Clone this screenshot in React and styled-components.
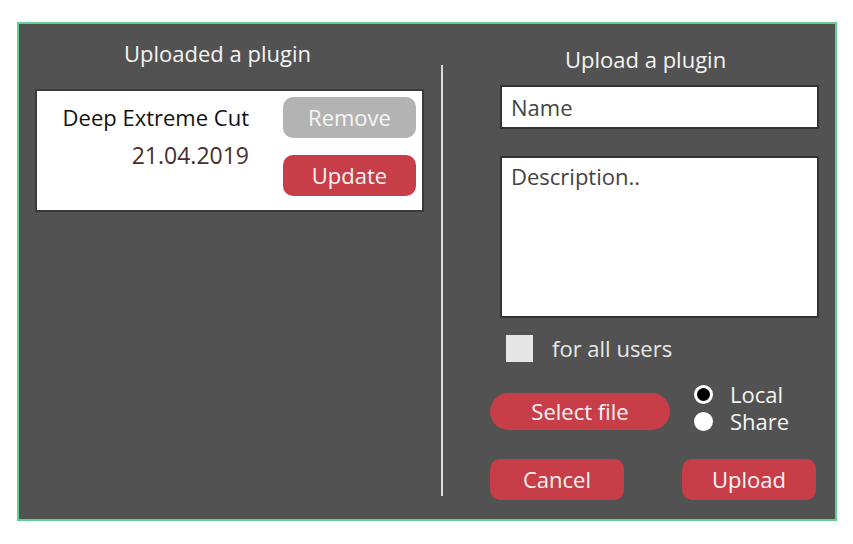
import React, { useState } from 'react';
import styled, { createGlobalStyle } from 'styled-components';

const GlobalStyle = createGlobalStyle`
    body {
        margin: 0;
        background: #fff;
        font-family: "Open Sans", "Liberation Sans", sans-serif;
    }
    * { box-sizing: border-box; }
`;

const Panel = styled.div`
    display: flex;
    width: 820px;
    height: 499px;
    margin: 22px 0 0 17px;
    background: #525252;
    border: 2px solid #5ed38f;
`;

const LeftColumn = styled.div`
    width: 422px;
    padding: 14px 0 0 16px;
    display: flex;
    flex-direction: column;
`;

const Divider = styled.div`
    width: 2px;
    margin: 41px 0 23px;
    background: #dcdcdc;
`;

const RightColumn = styled.div`
    flex: 1;
    padding: 20px 0 0 57px;
    display: flex;
    flex-direction: column;
`;

const Title = styled.h2`
    margin: 0;
    font-size: 22px;
    font-weight: 400;
    line-height: 30px;
    color: #f4f4f4;
    text-align: ${p => p.$align || 'center'};
    padding-left: ${p => p.$indent || 0}px;
    padding-right: ${p => p.$trail || 0}px;
    width: ${p => p.$width ? p.$width + 'px' : 'auto'};
`;

const Card = styled.div`
    margin-top: 21px;
    width: 389px;
    height: 123px;
    background: #fff;
    border: 2px solid #3a3a3a;
    display: flex;
    padding: 6px 6px 0 0;
`;

const CardInfo = styled.div`
    width: 212px;
    padding-top: 7px;
    text-align: right;
    display: flex;
    flex-direction: column;
    gap: 11px;
`;

const PluginName = styled.div`
    font-size: 22px;
    line-height: 27px;
    color: #111;
`;

const PluginDate = styled.div`
    font-size: 23px;
    line-height: 27px;
    color: #4a2e2e;
`;

const CardActions = styled.div`
    margin-left: auto;
    display: flex;
    flex-direction: column;
    gap: 17px;
`;

const Button = styled.button`
    width: ${p => p.$width}px;
    height: ${p => p.$height || 41}px;
    margin-top: ${p => p.$offset || 0}px;
    border: none;
    border-radius: ${p => p.$pill ? '19px' : '10px'};
    background: ${p => p.$variant === 'grey' ? '#b3b3b3' : '#c83e48'};
    color: #f6f6f6;
    font-family: inherit;
    font-size: 22px;
    line-height: 27px;
    padding: 0;
    cursor: pointer;
`;

const TextInput = styled.input`
    margin-top: 11px;
    width: 319px;
    height: 44px;
    border: 2px solid #333;
    background: #fff;
    padding: 0 9px;
    font-family: inherit;
    font-size: 22px;
    color: #333;
    outline: none;
    &::placeholder { color: #444; }
`;

const TextArea = styled.textarea`
    margin-top: 27px;
    width: 319px;
    height: 162px;
    border: 2px solid #333;
    background: #fff;
    padding: 3px 9px;
    font-family: inherit;
    font-size: 22px;
    line-height: 30px;
    color: #333;
    resize: none;
    outline: none;
    &::placeholder { color: #444; }
`;

const CheckRow = styled.label`
    margin: 17px 0 0 6px;
    height: 27px;
    display: flex;
    align-items: center;
    gap: 19px;
    font-size: 22px;
    line-height: 27px;
    color: #e8e8e8;
    cursor: pointer;
`;

const CheckBox = styled.span`
    width: 27px;
    height: 27px;
    background: #e6e6e6;
    display: flex;
    align-items: center;
    justify-content: center;
    color: #333;
    font-size: 18px;
`;

const FileRow = styled.div`
    margin: 19px 0 0 -10px;
    display: flex;
    align-items: flex-start;
    gap: 24px;
`;

const RadioGroup = styled.div`
    display: flex;
    flex-direction: column;
`;

const RadioOption = styled.label`
    display: flex;
    align-items: center;
    gap: 17px;
    height: 27px;
    font-size: 22px;
    line-height: 27px;
    color: #f4f4f4;
    cursor: pointer;
`;

const RadioDot = styled.span`
    width: 19px;
    height: 19px;
    border-radius: 50%;
    background: ${p => p.$checked ? '#000' : '#fff'};
    border: 3px solid #fff;
`;

const ActionRow = styled.div`
    margin: 24px 0 0 -10px;
    width: 326px;
    display: flex;
    justify-content: space-between;
`;

export default function App() {
    const [forAll, setForAll] = useState(false);
    const [target, setTarget] = useState('local');

    return (
        <>
            <GlobalStyle />
            <Panel>
                <LeftColumn>
                    <Title $align="center" $width={389} $trail={24}>Uploaded a plugin</Title>
                    <Card>
                        <CardInfo>
                            <PluginName>Deep Extreme Cut</PluginName>
                            <PluginDate>21.04.2019</PluginDate>
                        </CardInfo>
                        <CardActions>
                            <Button $width={133} $variant="grey">Remove</Button>
                            <Button $width={133}>Update</Button>
                        </CardActions>
                    </Card>
                </LeftColumn>
                <Divider />
                <RightColumn>
                    <Title $align="left" $indent={65}>Upload a plugin</Title>
                    <TextInput placeholder="Name" />
                    <TextArea placeholder="Description.." />
                    <CheckRow onClick={() => setForAll(!forAll)}>
                        <CheckBox>{forAll ? '✓' : ''}</CheckBox>
                        for all users
                    </CheckRow>
                    <FileRow>
                        <Button $width={180} $height={37} $offset={12} $pill>Select file</Button>
                        <RadioGroup>
                            <RadioOption onClick={() => setTarget('local')}>
                                <RadioDot $checked={target === 'local'} />
                                Local
                            </RadioOption>
                            <RadioOption onClick={() => setTarget('share')}>
                                <RadioDot $checked={target === 'share'} />
                                Share
                            </RadioOption>
                        </RadioGroup>
                    </FileRow>
                    <ActionRow>
                        <Button $width={134}>Cancel</Button>
                        <Button $width={134}>Upload</Button>
                    </ActionRow>
                </RightColumn>
            </Panel>
        </>
    );
}
